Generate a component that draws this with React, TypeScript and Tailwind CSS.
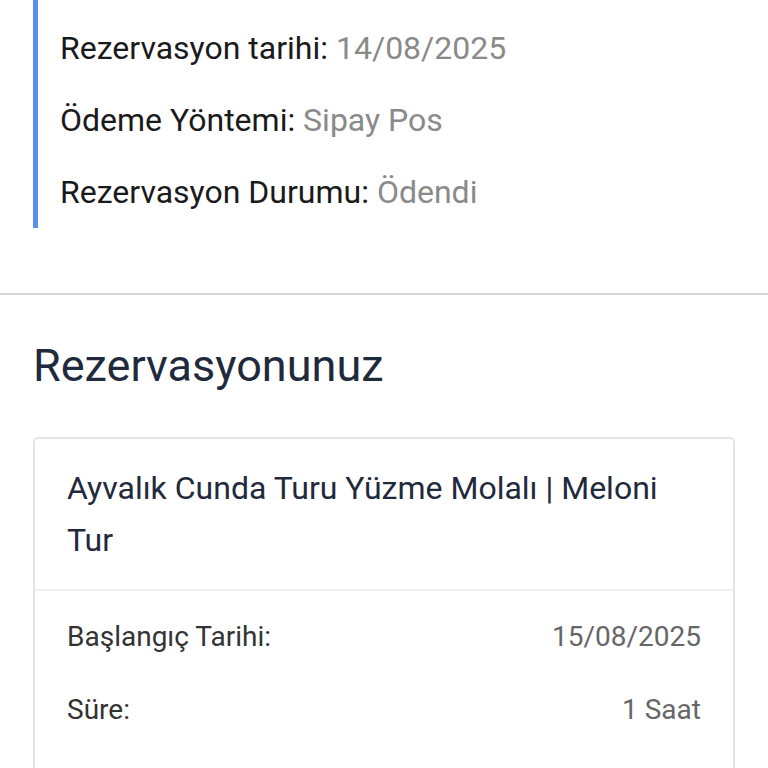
const font = { fontFamily: "Roboto, 'Noto Sans', sans-serif" };

const summary = [
  { label: "Rezervasyon tarihi:", value: "14/08/2025" },
  { label: "Ödeme Yöntemi:", value: "Sipay Pos" },
  { label: "Rezervasyon Durumu:", value: "Ödendi" },
];

const details = [
  { label: "Başlangıç Tarihi:", value: "15/08/2025" },
  { label: "Süre:", value: "1 Saat" },
];

export default function App() {
  return (
    <div className="min-h-[768px] bg-white" style={font}>
      <div className="px-[33px]">
        <div className="border-l-[5px] border-[#5b8ff0] pl-[22px] pt-[12px]">
          {summary.map((s) => (
            <div key={s.label} className="text-[32px] leading-[72px] text-[#1a1a1a]">
              {s.label} <span className="text-[#8a8a8a]">{s.value}</span>
            </div>
          ))}
        </div>
      </div>

      <div className="mt-[65px] h-[2px] bg-[#d9d9d9]" />

      <div className="px-[33px]">
        <h2 className="pt-[36px] pb-[36px] text-[45px] leading-[70px] font-normal text-[#1f2a3c]">
          Rezervasyonunuz
        </h2>

        <div className="rounded-[5px] border-2 border-[#e4e4e4]">
          <div className="px-[32px] py-[23px] text-[32px] leading-[52px] text-[#1f2a3c]">
            Ayvalık Cunda Turu Yüzme Molalı | Meloni Tur
          </div>
          <div className="h-[2px] bg-[#efefef]" />
          <div className="px-[32px] pt-[9px] pb-[40px]">
            {details.map((d) => (
              <div
                key={d.label}
                className="flex items-center justify-between text-[28px] leading-[73px]"
              >
                <span className="text-[#333]">{d.label}</span>
                <span className="text-[#666]">{d.value}</span>
              </div>
            ))}
          </div>
        </div>
      </div>
    </div>
  );
}
